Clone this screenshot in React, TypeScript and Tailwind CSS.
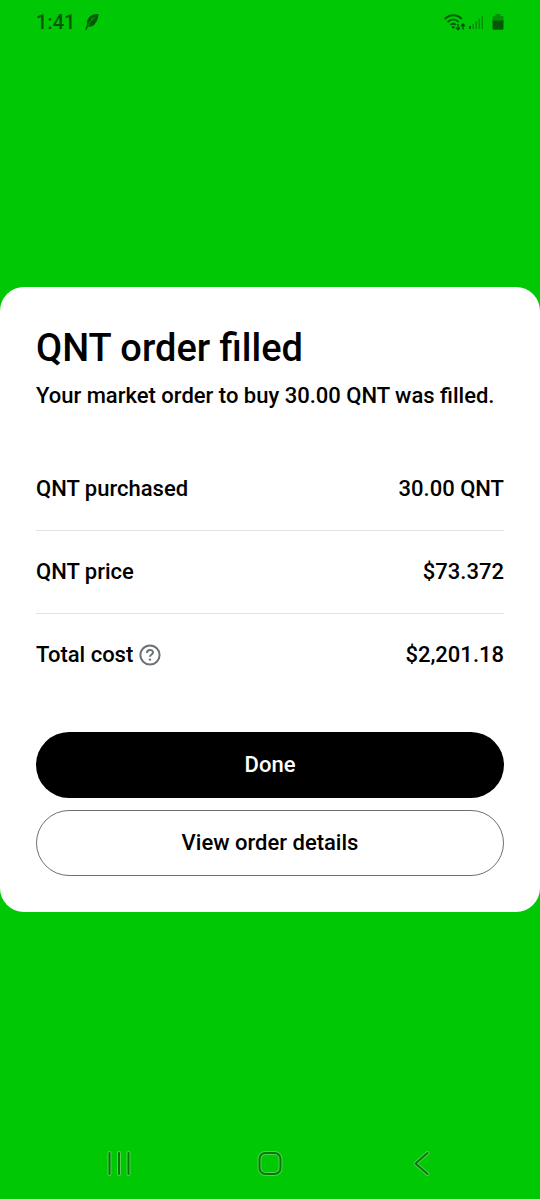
import clsx from "clsx";
import type { ReactNode } from "react";

interface OrderRowProps {
  label: string;
  value: string;
  last?: boolean;
  children?: ReactNode;
}

const StatusBar = () => (
  <header className="h-18 px-9 text-[#045a04]">
    <div className="flex h-11 items-center justify-between">
      <div className="flex items-center gap-2.5">
        <span className="text-xl leading-6 font-medium">1:41</span>
        <svg className="h-[18px] w-[14px]" viewBox="0 0 14 18" fill="currentColor">
          <path d="M13.6 1.2C9.8.6 7 1.6 5 3.600 2.400 6 1.800 8.600 2 11.600L.2 16.600l1.200.6 1.500-3.500c2.700.2 5.300-.5 6.600-2.200l2.600-4c.8-1.700 1.300-4 1.500-6.300z" />
          <path d="M2.900 13.200C4.400 9.400 6.800 6.200 10.600 3.800M7.200 4.400v3" stroke="#00c805" strokeWidth=".6" fill="none" />
        </svg>
      </div>
      <div className="flex items-center gap-1">
        <svg className="h-[18px] w-[22px]" viewBox="0 0 22 18" fill="none" stroke="currentColor" strokeWidth="1.8">
          <path d="M1.800 6c5-5 12-5 17 0M4.600 9c3.400-3.200 7.800-3.200 11.200 0M7.500 11.900c1.800-1.600 3.600-1.600 5.400 0" />
          <circle cx="10.200" cy="14.200" r="1.300" fill="currentColor" stroke="none" />
          <path d="M15 11v5.500M13 14.500l2 2.200 2-2.200M20 16.500V11M18 13.200l2-2.200 2 2.200" strokeWidth="1.500" />
        </svg>
        <svg className="h-4 w-[15px]" viewBox="0 0 15 16" fill="currentColor">
          <path d="M0 12h2v3H0z" />
          <path d="M3.500 10H5v5H3.500zM6.500 7H8v8H6.500zM9.500 4.500H11V15H9.500zM12.500 2H14v13h-1.500z" opacity=".5" />
        </svg>
        <svg className="ml-1 h-4 w-3" viewBox="0 0 12 16" fill="currentColor">
          <path d="M3.500 0h5v2h2a1 1 0 0 1 1 1v4H.5V3a1 1 0 0 1 1-1h2z" opacity=".5" />
          <path d="M.5 6.500h11v8a1.200 1.200 0 0 1-1.200 1.200H1.700A1.200 1.200 0 0 1 .5 14.500z" />
        </svg>
      </div>
    </div>
  </header>
);

const OrderRow = ({ label, value, last, children }: OrderRowProps) => (
  <div className={clsx("flex items-center justify-between py-[27px]", !last && "border-b border-[#dfe4e8]")}>
    <dt className="flex items-center gap-1.5">
      {label}
      {children}
    </dt>
    <dd>{value}</dd>
  </div>
);

const HelpIcon = () => (
  <svg className="size-[22px]" viewBox="0 0 22 22" fill="none" stroke="currentColor" strokeWidth="2">
    <circle cx="11" cy="11" r="9.6" />
    <path d="M8 9c0-4 6-4 6-.6 0 2-3 2.200-3 4.400" />
    <circle cx="11" cy="15.600" r="1.200" fill="currentColor" stroke="none" />
  </svg>
);

// pale outline under a dark stroke, shared by the three keys
const NavIcon = ({ d }: { d: string }) => (
  <svg className="size-7" viewBox="0 0 28 28" fill="none" strokeLinecap="round" strokeLinejoin="round">
    <path d={d} stroke="#4fd04f" strokeWidth="4" />
    <path d={d} stroke="#087a08" strokeWidth="2" />
  </svg>
);

const NavBar = () => (
  <nav className="grid h-18 grid-cols-3 items-center justify-items-center px-11">
    <button type="button" aria-label="Recent apps">
      <NavIcon d="M4.500 4v21M14 4v21M23.500 4v21" />
    </button>
    <button type="button" aria-label="Home">
      <NavIcon d="M9.500 4h9a6 6 0 0 1 6 6v9a6 6 0 0 1-6 6h-9a6 6 0 0 1-6-6v-9a6 6 0 0 1 6-6z" />
    </button>
    <button type="button" aria-label="Back">
      <NavIcon d="M20.500 4L8.500 14.500l12 10.500" />
    </button>
  </nav>
);

const App = () => {
  return (
    <div className="flex min-h-screen flex-col bg-[#00c805] font-['Roboto',sans-serif] text-black">
      <StatusBar />
      <main className="flex flex-1 flex-col justify-center">
        <section className="rounded-3xl bg-white px-9 pt-[39px] pb-9 text-[22px] leading-7 font-medium">
          <h1 className="text-[38px] leading-11 font-medium">QNT order filled</h1>
          <p className="mt-3">Your market order to buy 30.00 QNT was filled.</p>
          <dl className="mt-[38px]">
            <OrderRow label="QNT purchased" value="30.00 QNT" />
            <OrderRow label="QNT price" value="$73.372" />
            <OrderRow label="Total cost" value="$2,201.18" last>
              <button type="button" aria-label="About total cost" className="text-[#6a7378]">
                <HelpIcon />
              </button>
            </OrderRow>
          </dl>
          <div className="mt-9 flex flex-col gap-3">
            <button type="button" className="h-[66px] rounded-full bg-black text-white">
              Done
            </button>
            <button type="button" className="h-[66px] rounded-full border border-[#6f6f6f]">
              View order details
            </button>
          </div>
        </section>
      </main>
      <NavBar />
    </div>
  );
};

export default App;
